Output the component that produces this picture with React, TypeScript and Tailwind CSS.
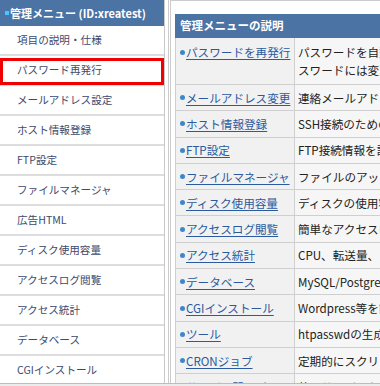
import React from "react";

const MENU = [
  "項目の説明・仕様",
  "パスワード再発行",
  "メールアドレス設定",
  "ホスト情報登録",
  "FTP設定",
  "ファイルマネージャ",
  "広告HTML",
  "ディスク使用容量",
  "アクセスログ閲覧",
  "アクセス統計",
  "データベース",
  "CGIインストール",
];

const ROWS: { name: string; desc: string }[] = [
  { name: "メールアドレス変更", desc: "連絡メールアドレスを変更します。" },
  { name: "ホスト情報登録", desc: "SSH接続のための公開鍵を登録します。" },
  { name: "FTP設定", desc: "FTP接続情報を設定します。" },
  { name: "ファイルマネージャ", desc: "ファイルのアップロード、削除を行います。" },
  { name: "ディスク使用容量", desc: "ディスクの使用容量を確認します。" },
  { name: "アクセスログ閲覧", desc: "簡単なアクセスログを閲覧できます。" },
  { name: "アクセス統計", desc: "CPU、転送量、アクセス数の統計です。" },
  { name: "データベース", desc: "MySQL/PostgreSQLの管理を行います。" },
  { name: "CGIインストール", desc: "Wordpress等を簡単にインストールします。" },
  { name: "ツール", desc: "htpasswdの生成などのツールです。" },
  { name: "CRONジョブ", desc: "定期的にスクリプトを実行します。" },
  { name: "サーバー間コピー", desc: "他のサーバーからファイルをコピーします。" },
];

const font = { fontFamily: '"Noto Sans CJK JP", "Noto Sans", sans-serif' };

function Link({ children }: { children: React.ReactNode }) {
  return (
    <span className="flex items-center">
      <span className="mr-[1px] inline-block h-[5px] w-[5px] rounded-full bg-[#3f86c9]" />
      <span className="text-[#2b5a9e] underline underline-offset-[2px] decoration-[1px]">
        {children}
      </span>
    </span>
  );
}

export default function App() {
  return (
    <div
      className="flex h-[386px] w-[380px] flex-col overflow-hidden bg-white"
      style={font}
    >
      <div className="flex h-[383px] shrink-0 overflow-hidden">
        {/* left menu */}
        <div className="w-[165px] shrink-0 border-r border-[#c9c9c9]">
          <div className="flex h-[26px] items-center bg-[#4b73a4] pl-[5px] text-[11px] font-bold text-white">
            <span className="mr-[1px] inline-block h-[4px] w-[4px] bg-[#4fc3f7]" />
            管理メニュー (ID:xreatest)
          </div>
          {MENU.map((item, i) => (
            <div
              key={item}
              className="relative flex h-[30px] items-center border-b-2 border-[#dddddd] pl-[17px] text-[10.6px] text-[#3d4a6c]"
            >
              {item}
              {i === 1 && (
                <div className="absolute left-0 right-0 top-[2px] bottom-[-1px] border-[3px] border-[#f00000]" />
              )}
            </div>
          ))}
        </div>

        <div className="w-[3px] shrink-0" />

        {/* right panel */}
        <div className="min-w-0 flex-1 border-l border-[#cccccc]">
          <div className="ml-[1px] h-full border-l border-t border-[#cccccc] pl-[4px] pt-[13px]">
            <div className="flex h-[24px] items-center bg-[#4b73a4] pl-[5px] text-[11.5px] font-bold text-white">
              管理メニューの説明
            </div>
            <div className="whitespace-nowrap text-[11.6px] leading-[18px]">
              <div className="flex h-[47px] border-b border-l border-[#cfcfcf]">
                <div className="w-[119px] shrink-0 border-r border-[#cfcfcf] bg-[#f1f1f1] pl-[4px] pt-[5px]">
                  <Link>パスワードを再発行</Link>
                </div>
                <div className="flex-1 overflow-hidden bg-[#f6f6f6] pl-[3px] pt-[5px] text-[#222]">
                  パスワードを自動で再発行します。新しいパ
                  <br />
                  スワードには変更の必要があります。
                </div>
              </div>
              {ROWS.map((r) => (
                <div
                  key={r.name}
                  className="flex h-[26.3px] border-b border-l border-[#cfcfcf]"
                >
                  <div className="flex w-[119px] shrink-0 items-center border-r border-[#cfcfcf] bg-[#f1f1f1] pl-[4px]">
                    <Link>{r.name}</Link>
                  </div>
                  <div className="flex flex-1 items-center overflow-hidden bg-[#f6f6f6] pl-[3px] text-[#222]">
                    {r.desc}
                  </div>
                </div>
              ))}
            </div>
          </div>
        </div>
      </div>
      <div className="flex-1 border-t border-[#bdbdbd] bg-[#ececec]" />
    </div>
  );
}
